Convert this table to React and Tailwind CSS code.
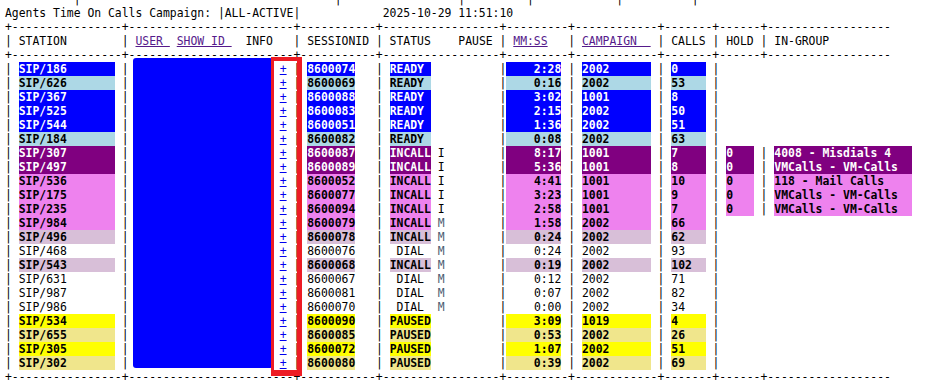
import React from 'react';

// row colour classes, same names the report uses
const styles = {
  blue: 'bg-[#0000ff] text-white font-bold',
  lightblue: 'bg-[#add8e6] text-black font-bold',
  purple: 'bg-[#800080] text-white font-bold',
  violet: 'bg-[#ee82ee] text-black font-bold',
  thistle: 'bg-[#d8bfd8] text-black font-bold',
  white: 'text-black',
  yellow: 'bg-[#ffff00] text-black font-bold',
  khaki: 'bg-[#f0e68c] text-black font-bold',
};

const cell = 'inline-block h-[14px] align-top';
const link = 'underline text-[#551a8b]';

const agents = [
  ['SIP/186', 'blue', '8600074', 'READY', '', '2:28', '2002', '0'],
  ['SIP/626', 'lightblue', '8600069', 'READY', '', '0:16', '2002', '53'],
  ['SIP/367', 'blue', '8600088', 'READY', '', '3:02', '1001', '8'],
  ['SIP/525', 'blue', '8600083', 'READY', '', '2:15', '2002', '50'],
  ['SIP/544', 'blue', '8600051', 'READY', '', '1:36', '2002', '51'],
  ['SIP/184', 'lightblue', '8600082', 'READY', '', '0:08', '2002', '63'],
  ['SIP/307', 'purple', '8600087', 'INCALL', 'I', '8:17', '1001', '7', '0', '4008 - Misdials 4'],
  ['SIP/497', 'purple', '8600089', 'INCALL', 'I', '5:36', '1001', '8', '0', 'VMCalls - VM-Calls'],
  ['SIP/536', 'violet', '8600052', 'INCALL', 'I', '4:41', '1001', '10', '0', '118 - Mail Calls'],
  ['SIP/175', 'violet', '8600077', 'INCALL', 'I', '3:23', '1001', '9', '0', 'VMCalls - VM-Calls'],
  ['SIP/235', 'violet', '8600094', 'INCALL', 'I', '2:58', '1001', '7', '0', 'VMCalls - VM-Calls'],
  ['SIP/984', 'violet', '8600079', 'INCALL', 'M', '1:58', '2002', '66'],
  ['SIP/496', 'thistle', '8600078', 'INCALL', 'M', '0:24', '2002', '62'],
  ['SIP/468', 'white', '8600076', ' DIAL', 'M', '0:24', '2002', '93'],
  ['SIP/543', 'thistle', '8600068', 'INCALL', 'M', '0:19', '2002', '102'],
  ['SIP/631', 'white', '8600067', ' DIAL', 'M', '0:12', '2002', '71'],
  ['SIP/987', 'white', '8600081', ' DIAL', 'M', '0:07', '2002', '82'],
  ['SIP/986', 'white', '8600070', ' DIAL', 'M', '0:00', '2002', '34'],
  ['SIP/534', 'yellow', '8600090', 'PAUSED', '', '3:09', '1019', '4'],
  ['SIP/655', 'khaki', '8600085', 'PAUSED', '', '0:53', '2002', '26'],
  ['SIP/305', 'yellow', '8600072', 'PAUSED', '', '1:07', '2002', '51'],
  ['SIP/302', 'khaki', '8600080', 'PAUSED', '', '0:39', '2002', '69'],
];

const padR = (s, n) => s + ' '.repeat(Math.max(0, n - s.length));
const padL = (s, n) => ' '.repeat(Math.max(0, n - s.length)) + s;

// segs: [col, text, className] placed on a fixed char grid
function Line({ segs }) {
  let cur = 0;
  const out = [];
  segs.forEach(([col, text, cls], i) => {
    if (col > cur) out.push(' '.repeat(col - cur));
    out.push(<span key={i} className={cls}>{text}</span>);
    cur = col + text.length;
  });
  return <div className="h-[14px] leading-[14px] whitespace-pre">{out}</div>;
}

function dashes(cols, end) {
  let s = '';
  for (let c = 0; c <= end; c++) s += cols.includes(c) ? '+' : '-';
  return s;
}

const joints = [0, 17, 42, 54, 72, 82, 95, 103, 110];

function AgentRow({ a }) {
  const [station, color, session, status, code, time, campaign, calls, hold, ingroup] = a;
  const st = styles[color];
  const c = color === 'white' ? '' : cell + ' ' + st;
  const segs = [
    [0, '|'],
    [2, padR(station, 14), c],
    [17, '|'],
    [40, '+', 'underline text-[#0000ee]'],
    [42, '|'],
    [44, session, c],
    [54, '|'],
    [56, padR(status, 6), c],
  ];
  if (code) segs.push([63, code, code === 'M' ? 'text-[#4a5a70]' : 'text-black']);
  segs.push(
    [72, '|'],
    [73, padL(time, 8), c],
    [82, '|'],
    [84, padR(campaign, 10), c],
    [95, '|'],
    [97, padR(calls, 5), c],
    [103, '|'],
  );
  if (hold) {
    segs.push([105, padR(hold, 4), c], [110, '|'], [112, padR(ingroup, 20), c]);
  }
  return <Line segs={segs} />;
}

export default function App() {
  return (
    <div className="w-[947px] h-[383px] overflow-hidden bg-white text-black">
      <div className="relative -mt-[8px] pl-[5px] font-['DejaVu_Sans_Mono',monospace] text-[11.41px]">
        <Line segs={[10, 48, 66, 76, 89, 100].map((c) => [c, '|'])} />
        <Line segs={[[0, 'Agents Time On Calls Campaign: |ALL-ACTIVE|'], [55, '2025-10-29 11:51:10']]} />
        <Line segs={[[0, dashes(joints, 128)]]} />
        <Line
          segs={[
            [0, '| STATION'],
            [17, '|'],
            [19, 'USER ', link],
            [25, 'SHOW ID ', link],
            [35, 'INFO'],
            [42, '| SESSIONID'],
            [54, '| STATUS'],
            [66, 'PAUSE'],
            [72, '|'],
            [74, 'MM:SS', link],
            [82, '|'],
            [84, 'CAMPAIGN  ', link],
            [95, '| CALLS'],
            [103, '| HOLD'],
            [110, '| IN-GROUP'],
          ]}
        />
        <Line segs={[[0, dashes(joints, 128)]]} />
        {agents.map((a) => (
          <AgentRow key={a[0]} a={a} />
        ))}
        <Line segs={[[0, dashes(joints, 128)]]} />

        {/* redaction over the user column */}
        <div className="absolute left-[133px] top-[66px] w-[140px] h-[310px] bg-[#0000ff] rounded-[3px]" />
        {/* hand drawn box round the info links */}
        <div className="absolute left-[271px] top-[65px] w-[31px] h-[319px] border-t-4 border-r-[5px] border-b-[6px] border-l-[3px] border-[#ed1c24]" />
      </div>
    </div>
  );
}
